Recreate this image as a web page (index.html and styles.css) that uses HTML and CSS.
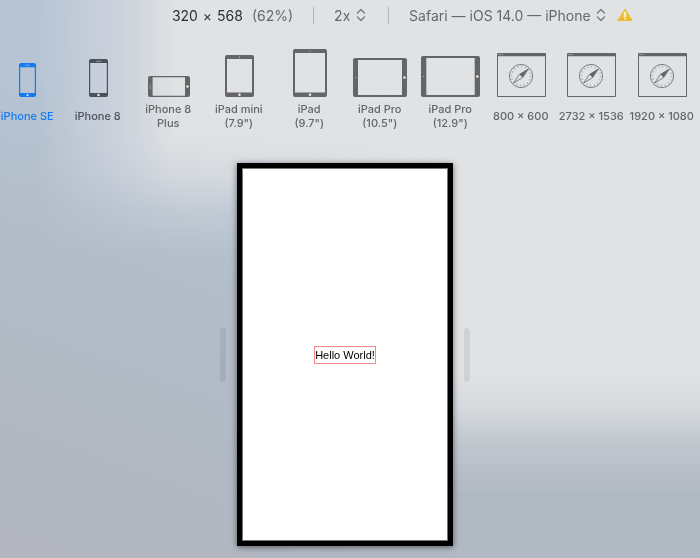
FILE: index.html
```html
<!DOCTYPE html>
<html lang="en">
<head>
<meta charset="utf-8">
<title>Responsive Design Mode</title>
<link rel="stylesheet" href="styles.css">
</head>
<body>
<svg class="defs" aria-hidden="true">
  <symbol id="updown" viewBox="0 0 10 14"><path d="M1.500 5 5 1.500 8.500 5M1.500 9 5 12.500 8.500 9" fill="none" stroke="currentColor" stroke-width="1.300" stroke-linecap="round" stroke-linejoin="round"/></symbol>
  <symbol id="browser" viewBox="0 0 49 44">
    <path d="M1 0H48a1 1 0 0 1 1 1V43a1 1 0 0 1-1 1H1a1 1 0 0 1-1-1V1a1 1 0 0 1 1-1ZM1 3.300V43H48V3.300Z" fill="currentColor" fill-rule="evenodd"/>
    <path d="M1.500 1.500H6" stroke="#c4c6c8" stroke-width=".8" stroke-dasharray="1 .7"/>
    <circle cx="24" cy="23" r="11.600" fill="none" stroke="currentColor" stroke-width=".8"/>
    <circle cx="24" cy="23" r="9.500" fill="none" stroke="currentColor" stroke-width="1.400" stroke-dasharray=".7 3.031" opacity=".75"/>
    <path d="M31.300 16 25.600 24.600 22.400 21.400Z" fill="currentColor"/>
    <path d="M31.300 16 25.600 24.600 16.700 30 22.400 21.400Z" fill="none" stroke="currentColor" stroke-width=".8" stroke-linejoin="round"/>
  </symbol>
</svg>
<header class="toolbar">
  <div class="size"><span class="dims">320 <span class="times">×</span> 568</span><span>(62%)</span></div>
  <div class="group ratio">
    <select aria-label="Pixel ratio" class="pick"><option>2x</option></select>
    <svg class="updown" aria-hidden="true"><use href="#updown"/></svg>
  </div>
  <div class="group agent">
    <select aria-label="User agent" class="pick"><option>Safari — iOS 14.0 — iPhone</option></select>
    <svg class="updown" aria-hidden="true"><use href="#updown"/></svg>
    <svg class="warn" viewBox="0 0 16 14" role="img" aria-label="Warning">
      <defs><linearGradient id="amber" x1="0" y1="0" x2="0" y2="1"><stop offset="0" stop-color="#f8d867"/><stop offset="1" stop-color="#edb41c"/></linearGradient></defs>
      <path d="M8 1.200 15 12.500H1Z" fill="url(#amber)" stroke="#e9bd3c" stroke-width="1.200" stroke-linejoin="round"/>
      <path d="M8 4.500V8.800M8 10.600V11" stroke="#fff" stroke-width="1.500" stroke-linecap="round"/>
    </svg>
  </div>
</header>
<nav class="devices" aria-label="Devices">
  <button class="device selected"><span class="icon"><svg width="17" height="34" viewBox="0 0 17 34"><path d="M2 0H15a2 2 0 0 1 2 2V32a2 2 0 0 1-2 2H2a2 2 0 0 1-2-2V2a2 2 0 0 1 2-2ZM1.200 4.200V30H15.800V4.200Z" fill="currentColor" fill-rule="evenodd"/><path d="M6.500 2.200H10.500" stroke="#a3bedf" stroke-width=".8"/><circle cx="8.500" cy="32" r="1.100" fill="#e8f0fa"/></svg></span><span class="label">iPhone SE</span></button>
  <button class="device dark"><span class="icon"><svg width="19" height="38" viewBox="0 0 19 38"><path d="M2 0H17a2 2 0 0 1 2 2V36a2 2 0 0 1-2 2H2a2 2 0 0 1-2-2V2a2 2 0 0 1 2-2ZM1.200 4V34H17.800V4Z" fill="currentColor" fill-rule="evenodd"/><path d="M7 2.200H12" stroke="#a4aab4" stroke-width=".8"/><circle cx="9.500" cy="36" r="1.200" fill="#f0f2f4"/></svg></span><span class="label">iPhone 8</span></button>
  <button class="device"><span class="icon"><svg width="42" height="21" viewBox="0 0 42 21"><path d="M2 0H40a2 2 0 0 1 2 2V19a2 2 0 0 1-2 2H2a2 2 0 0 1-2-2V2a2 2 0 0 1 2-2ZM4.600 1.200V19.800H37V1.200Z" fill="currentColor" fill-rule="evenodd"/><path d="M2.300 8.500V13" stroke="#aaacae" stroke-width=".8"/><circle cx="39.500" cy="10.500" r="1.200" fill="#f3f3f3"/></svg></span><span class="label">iPhone 8 Plus</span></button>
  <button class="device"><span class="icon"><svg width="29" height="42" viewBox="0 0 29 42"><path d="M2 0H27a2 2 0 0 1 2 2V40a2 2 0 0 1-2 2H2a2 2 0 0 1-2-2V2a2 2 0 0 1 2-2ZM2 4V37.500H27V4Z" fill="currentColor" fill-rule="evenodd"/><circle cx="14.500" cy="2.200" r=".6" fill="#c4c5c6"/><circle cx="14.500" cy="39.700" r="1.200" fill="#f3f3f3"/></svg></span><span class="label">iPad mini (7.9")</span></button>
  <button class="device"><span class="icon"><svg width="34" height="48" viewBox="0 0 34 48"><path d="M2 0H32a2 2 0 0 1 2 2V46a2 2 0 0 1-2 2H2a2 2 0 0 1-2-2V2a2 2 0 0 1 2-2ZM2 4V43.500H32V4Z" fill="currentColor" fill-rule="evenodd"/><circle cx="17" cy="2.200" r=".6" fill="#b4b5b6"/><circle cx="17" cy="45.700" r="1.200" fill="#f3f3f3"/></svg></span><span class="label">iPad<br>(9.7")</span></button>
  <button class="device"><span class="icon"><svg width="54" height="39" viewBox="0 0 54 39"><path d="M2 0H52a2 2 0 0 1 2 2V37a2 2 0 0 1-2 2H2a2 2 0 0 1-2-2V2a2 2 0 0 1 2-2ZM5 2V37H49V2Z" fill="currentColor" fill-rule="evenodd"/><circle cx="2.500" cy="19.500" r=".6" fill="#c4c5c6"/><circle cx="51.500" cy="19.500" r="1.200" fill="#f3f3f3"/></svg></span><span class="label">iPad Pro (10.5")</span></button>
  <button class="device"><span class="icon"><svg width="59" height="41" viewBox="0 0 59 41"><path d="M2 0H57a2 2 0 0 1 2 2V39a2 2 0 0 1-2 2H2a2 2 0 0 1-2-2V2a2 2 0 0 1 2-2ZM5.300 2V39H53.700V2Z" fill="currentColor" fill-rule="evenodd"/><circle cx="2.600" cy="20.500" r=".6" fill="#c4c5c6"/><circle cx="56.400" cy="20.500" r="1.200" fill="#f3f3f3"/></svg></span><span class="label">iPad Pro (12.9")</span></button>
  <button class="device"><span class="icon"><svg width="49" height="44"><use href="#browser"/></svg></span><span class="label">800 × 600</span></button>
  <button class="device"><span class="icon"><svg width="49" height="44"><use href="#browser"/></svg></span><span class="label">2732 × 1536</span></button>
  <button class="device"><span class="icon"><svg width="49" height="44"><use href="#browser"/></svg></span><span class="label">1920 × 1080</span></button>
</nav>
<main class="stage">
  <span class="handle"></span>
  <div class="screen"><p class="hello">Hello World!</p></div>
  <span class="handle"></span>
</main>
</body>
</html>
```
FILE: styles.css
```css
* { box-sizing: border-box; }

body {
  margin: 0;
  min-height: 100vh;
  display: flex;
  flex-direction: column;
  overflow-x: hidden;
  font-family: Inter, "Liberation Sans", sans-serif;
  color: #66686a;
  background:
    linear-gradient(to right, transparent 35%, #b1b9c3 64%),
    linear-gradient(200deg, #b6c7d8 0%, #b6c4d3 40%, #b3bdc9 58%, #b1b9c3 78%, #b3b6be 100%);
}

/* Soft light areas behind the content */
body::before,
body::after {
  content: "";
  position: fixed;
  inset: 0;
  z-index: -1;
}

body::before {
  background: linear-gradient(to right, transparent 5%, #ccd2dc 17%, #dfe1e3 25%, #e0e2e4 30%);
  mask-image: linear-gradient(to bottom, #000 24%, rgb(0 0 0 / 75%) 31%, rgb(0 0 0 / 30%) 38%, transparent 46%);
}

body::after {
  background: linear-gradient(to right, transparent 33%, #e0e2e4 62%);
  mask-image: linear-gradient(to bottom, #000 67%, rgb(0 0 0 / 80%) 73%, rgb(0 0 0 / 30%) 80%, transparent 89%);
}

.defs { position: absolute; width: 0; height: 0; }

.toolbar {
  display: flex;
  justify-content: center;
  align-items: center;
  height: 30px;
  padding-left: 105px;
  font-size: 14px;
}

.size, .group { display: flex; align-items: center; }
.size { gap: 9px; margin-left: auto; padding-right: 20px; white-space: nowrap; }
.dims { color: #2e3032; }
.times { margin: 0 1px; }

.group::before {
  content: "";
  width: 1px;
  height: 17px;
  background: #b5b7b9;
}

.pick {
  appearance: none;
  border: 0;
  padding: 0;
  margin: 0 5px 0 20px;
  background: none;
  font: inherit;
  color: inherit;
}

.ratio { padding-right: 22px; }
.agent { margin-right: auto; }
.updown { width: 10px; height: 14px; color: #77797b; }
.warn { width: 16px; height: 14px; margin-left: 11px; }

.devices {
  display: grid;
  grid-template-columns: repeat(10, 1fr);
  margin: 18px 3px 0 -8px;
}

.device {
  display: flex;
  flex-direction: column;
  align-items: center;
  gap: 5px;
  min-width: 0;
  padding: 0;
  border: 0;
  background: none;
  font: 500 11px/14px Inter, "Liberation Sans", sans-serif;
  color: #636567;
}

.dark { color: #4b515b; }
.selected { color: #1478f2; }

.icon {
  display: flex;
  align-items: flex-end;
  height: 49px;
  padding-left: 1px;
}

.label {
  display: flex;
  flex-direction: column;
  justify-content: center;
  height: 28px;
  max-width: 68px;
  text-align: center;
}

.stage {
  flex: 1;
  display: flex;
  justify-content: center;
  align-items: center;
  gap: 11px;
  padding: 33px 10px 12px 0;
}

.screen {
  display: flex;
  justify-content: center;
  align-items: center;
  width: 216px;
  aspect-ratio: 216 / 383;
  border: 5px solid #000;
  background: #fff;
  box-shadow: inset 0 0 0 1px #777, 0 1px 6px #0008;
}

.hello {
  margin: 0;
  border: 1px solid #f5898b;
  font: 11px/16px "Liberation Sans", Arial, sans-serif;
  color: #000;
}

.handle {
  width: 6px;
  height: 54px;
  border-radius: 3px;
  background: rgb(0 0 0 / 7%);
}
```
